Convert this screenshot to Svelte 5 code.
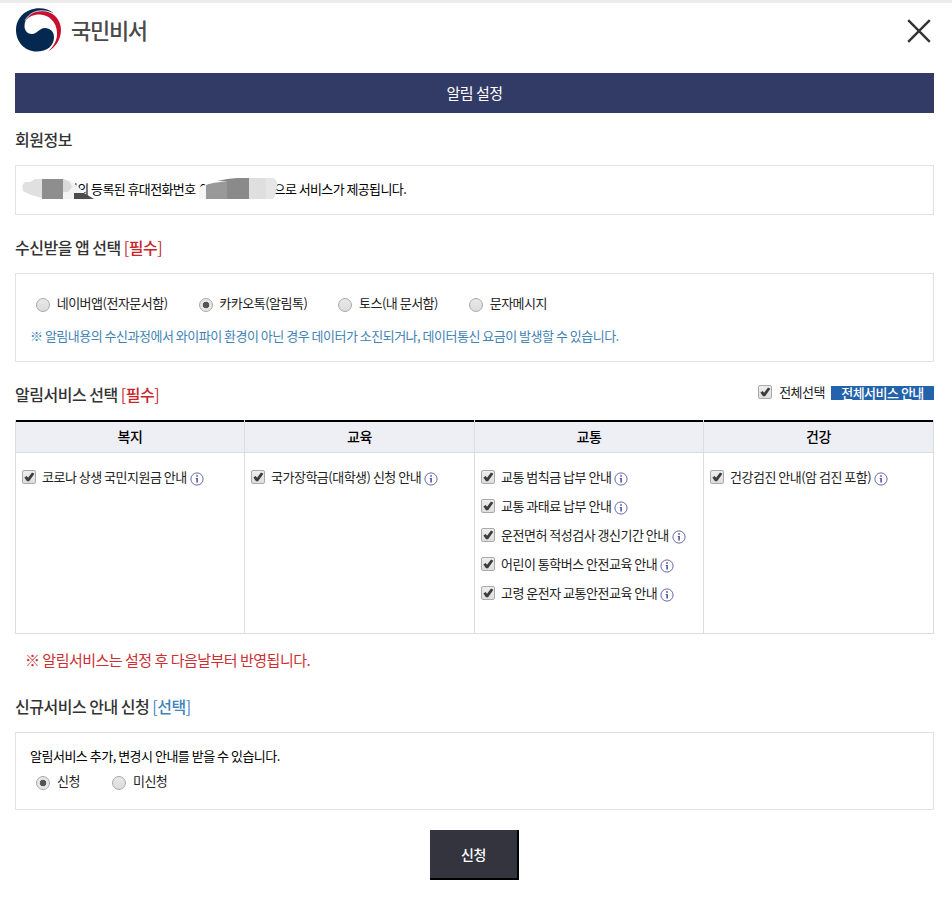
<script>
	const apps = ["네이버앱(전자문서함)", "카카오톡(알림톡)", "토스(내 문서함)", "문자메시지"];

	const services = [
		{ title: "복지", items: ["코로나 상생 국민지원금 안내"] },
		{ title: "교육", items: ["국가장학금(대학생) 신청 안내"] },
		{
			title: "교통",
			items: [
				"교통 범칙금 납부 안내",
				"교통 과태료 납부 안내",
				"운전면허 적성검사 갱신기간 안내",
				"어린이 통학버스 안전교육 안내",
				"고령 운전자 교통안전교육 안내"
			]
		},
		{ title: "건강", items: ["건강검진 안내(암 검진 포함)"] }
	];

	const total = services.reduce((n, s) => n + s.items.length, 0);

	let app = $state("카카오톡(알림톡)");
	let join = $state("신청");
	let checked = $state(services.flatMap((s) => s.items));
	let all = $derived(checked.length === total);

	const toggle = (item) => {
		checked = checked.includes(item) ? checked.filter((c) => c !== item) : [...checked, item];
	};

	const toggleAll = () => {
		checked = all ? [] : services.flatMap((s) => s.items);
	};
</script>

{#snippet checkbox(on, onchange, label)}
	<label class="check">
		<span class="box">
			<input type="checkbox" checked={on} {onchange} />
			{#if on}
				<svg viewBox="0 0 14 14"><path d="M2.400 7.400 4.600 6.100l1.500 1.600 3.900-5.200 2.400 1.300-5.300 7.400H5z" /></svg>
			{/if}
		</span>
		<span>{label}</span>
	</label>
{/snippet}

<div class="page">
	<header>
		<div class="brand">
			<svg class="logo" viewBox="0 0 46 44">
				<path fill="#052850" d="M38 5.500C32 0 22-1.200 14 2 5 5.500 0 13 0 22c0 12 9 21.500 20.500 21.500C31 43.500 38 38 38 29c0-5.500-4-9-9-9-6 0-7.500 6-13 6-4.500 0-7.500-3.500-7.500-8C8.500 10 16 3 26 3c5 0 9 1 12 2.500z" />
				<path fill="#c8102e" d="M9.500 12.500C13 6 19 3 26 3c11 0 19 8 19 19 0 9-5 17-13 21.500C38 38 41.500 32 41 24 40.500 14 33 7 24 6.500c-6-.3-11 2-14.500 6z" />
				<path fill="none" stroke="#fff" stroke-width=".7" d="M9 12.500C13 5.500 19 2.700 26 2.700c5 0 9 1.300 12.500 4" />
			</svg>
			<span>국민비서</span>
		</div>
		<button class="close" aria-label="닫기">
			<svg viewBox="0 0 24 24"><path d="M1.200 1.200 22.800 22.800M22.800 1.200 1.200 22.800" /></svg>
		</button>
	</header>

	<h1>알림 설정</h1>

	<h2 class="first">회원정보</h2>
	<div class="panel member">
		<span>님의 등록된 휴대전화번호</span>
		<span class="phone">010</span>
		<span>으로 서비스가 제공됩니다.</span>
		<svg class="mask" viewBox="0 0 280 48">
			<path fill="#f3f3f3" d="M45 14h9l14 12 5 7H28z" />
			<path fill="#e0e0e0" d="M26 13h-7l-5 3H9q-4 3-2 9l8 4 11 3z" />
			<path fill="#dadada" d="M47 13q7 1 9 8l-4 5h-5z" />
			<path fill="#8e8e8e" d="M26 13h21v20H26z" />
			<path fill="#4d4d4d" d="M58 27h10l10 6H58z" />
			<path fill="#f5f5f5" d="M183 23q1-4 8-4v14h-8z" />
			<path fill="#999" d="M190 19l7-2 14-2v18h-21z" />
			<path fill="#8a8a8a" d="M201 15l10-2 10-1h12v21h-22V15z" />
			<path fill="#dfdfdf" d="M233 12h24q4 1 4 8t-4 13h-24z" />
			<path fill="#e6e6e6" d="M250 12h7q5 3 4 8l-4 13h-7z" />
		</svg>
	</div>

	<h2>수신받을 앱 선택 <em>[<b>필수</b>]</em></h2>
	<div class="panel apps">
		<div class="radios">
			{#each apps as name}
				<label><input type="radio" name="app" value={name} bind:group={app} />{name}</label>
			{/each}
		</div>
		<p>※ 알림내용의 수신과정에서 와이파이 환경이 아닌 경우 데이터가 소진되거나, 데이터통신 요금이 발생할 수 있습니다.</p>
	</div>

	<div class="row">
		<h2>알림서비스 선택 <em>[<b>필수</b>]</em></h2>
		<div class="tools">
			{@render checkbox(all, toggleAll, "전체선택")}
			<button class="guide">전체서비스 안내</button>
		</div>
	</div>
	<div class="services">
		{#each services as service}
			<section>
				<h3>{service.title}</h3>
				<ul>
					{#each service.items as item}
						<li>
							{@render checkbox(checked.includes(item), () => toggle(item), item)}
							<svg class="info" viewBox="0 0 14 14">
								<circle cx="7" cy="7" r="6.100" />
								<path d="M6.300 3.300h1.500v1.400H6.300zM5.700 5.900h2.100v4.500H6.400V6.800h-.7z" />
							</svg>
						</li>
					{/each}
				</ul>
			</section>
		{/each}
	</div>
	<p class="notice">※ 알림서비스는 설정 후 다음날부터 반영됩니다.</p>

	<h2 class="last">신규서비스 안내 신청 <em class="optional">[<b>선택</b>]</em></h2>
	<div class="panel join">
		<p>알림서비스 추가, 변경시 안내를 받을 수 있습니다.</p>
		<div class="radios">
			{#each ["신청", "미신청"] as name}
				<label><input type="radio" name="join" value={name} bind:group={join} />{name}</label>
			{/each}
		</div>
	</div>

	<button class="submit">신청</button>
</div>

<style>
	:global(body) {
		margin: 0;
		background: #fff;
	}
	.page {
		box-sizing: border-box;
		height: 924px;
		padding: 0 18px 0 15px;
		border-top: 3px solid #ececec;
		display: flex;
		flex-direction: column;
		font: 13px/20px "Noto Sans CJK KR", "Noto Sans", sans-serif;
		letter-spacing: -0.5px;
		color: #222;
		white-space: nowrap;
	}
	h1, h2, h3, p, ul {
		margin: 0;
		padding: 0;
	}
	button {
		font: inherit;
		letter-spacing: inherit;
		padding: 0;
		border: 0;
		cursor: pointer;
	}
	header {
		height: 70px;
		display: flex;
		justify-content: space-between;
		align-items: flex-start;
	}
	.brand {
		display: flex;
		gap: 9px;
		padding: 5px 0 0 1px;
		font-size: 22px;
		line-height: 42px;
		font-weight: 500;
		letter-spacing: -1.3px;
		color: #4a4a4a;
	}
	.logo {
		width: 46px;
		height: 44px;
	}
	.close {
		width: 24px;
		height: 24px;
		margin: 16px 3px 0 0;
		background: none;
	}
	.close svg {
		display: block;
		stroke: #333;
		stroke-width: 2.4;
	}
	h1 {
		height: 40px;
		font-size: 15px;
		line-height: 40px;
		font-weight: 400;
		text-align: center;
		color: #fff;
		background: #323a66;
	}
	h2 {
		height: 58px;
		font-size: 16px;
		line-height: 64px;
		font-weight: 500;
		color: #333;
	}
	h2.first {
		height: 52px;
		line-height: 52px;
	}
	em {
		font-style: normal;
		font-weight: 400;
		color: #c9252b;
	}
	em b {
		font-weight: 500;
	}
	em.optional {
		color: #4183bd;
	}
	.panel {
		box-sizing: border-box;
		border: 1px solid #e2e2e2;
	}
	.member {
		position: relative;
		height: 50px;
		padding: 0 0 2px 50px;
		display: flex;
		align-items: center;
		letter-spacing: -0.6px;
		color: #000;
	}
	.phone {
		width: 74px;
		padding-left: 4px;
	}
	.mask {
		position: absolute;
		left: 0;
		top: 0;
		width: 280px;
		height: 48px;
	}
	.apps {
		height: 89px;
		padding: 19px 14px 0;
	}
	.apps p {
		margin-top: 13px;
		color: #4183b5;
	}
	.radios {
		display: flex;
		gap: 32px;
		padding-left: 6px;
	}
	.radios label {
		display: flex;
		gap: 7px;
	}
	.apps .radios {
		gap: 31px;
	}
	.apps label {
		gap: 6.7px;
	}
	input[type="radio"] {
		appearance: none;
		box-sizing: border-box;
		width: 14px;
		height: 14px;
		margin: 5px 0 0;
		border: 1px solid #aaa;
		border-radius: 50%;
		background: linear-gradient(#e8e8e8, #dcdcdc);
	}
	input[type="radio"]:checked {
		background: radial-gradient(circle, #555 3px, #e6e6e6 3.6px);
	}
	.row {
		height: 58px;
		display: flex;
		justify-content: space-between;
	}
	.tools {
		display: flex;
		align-items: flex-start;
		gap: 6px;
		padding-top: 20px;
	}
	.tools .check {
		gap: 7px;
	}
	.guide {
		width: 103px;
		height: 14px;
		margin-top: 4px;
		line-height: 12px;
		font-weight: 500;
		color: #fff;
		background: #2463ab;
	}
	.check {
		display: flex;
		gap: 6px;
	}
	.box {
		position: relative;
		width: 14px;
		height: 14px;
		margin-top: 3px;
	}
	.box input {
		appearance: none;
		display: block;
		box-sizing: border-box;
		width: 14px;
		height: 14px;
		margin: 0;
		border: 1px solid #aaa;
		border-radius: 2px;
		background: linear-gradient(#eee, #dedede);
	}
	.box svg {
		position: absolute;
		inset: 0;
		fill: #3c3c3c;
		pointer-events: none;
	}
	.services {
		box-sizing: border-box;
		height: 214px;
		display: grid;
		grid-template-columns: 229px 230px 229px 231px;
		border-bottom: 1px solid #ddd;
	}
	section {
		border-left: 1px solid #ddd;
	}
	section:last-child {
		border-right: 1px solid #ddd;
	}
	h3 {
		height: 30px;
		border-top: 2px solid #000;
		border-bottom: 1px solid #ddd;
		font-size: 14px;
		line-height: 28px;
		font-weight: 500;
		text-align: center;
		color: #000;
		background: #eeeff5;
	}
	ul {
		list-style: none;
		padding: 14px 0 0 6px;
	}
	li {
		height: 29px;
		display: flex;
		gap: 3px;
	}
	.info {
		width: 14px;
		height: 14px;
		margin-top: 5px;
	}
	.info circle {
		fill: none;
		stroke: #5558a0;
		stroke-width: 0.9;
	}
	.info path {
		fill: #3b3e91;
	}
	.notice {
		padding: 16px 0 0 10px;
		font-size: 15px;
		color: #cb2f34;
	}
	h2.last {
		height: 62px;
		line-height: 72px;
	}
	.join {
		height: 78px;
		padding: 13px 14px 0;
		color: #000;
	}
	.join .radios {
		margin-top: 5px;
		color: #222;
	}
	.submit {
		box-sizing: border-box;
		width: 89px;
		height: 50px;
		margin-top: 20px;
		align-self: center;
		border: solid #000;
		border-width: 0 2px 2px 0;
		font-size: 14px;
		font-weight: 500;
		color: #fff;
		background: #34343f;
	}
</style>
